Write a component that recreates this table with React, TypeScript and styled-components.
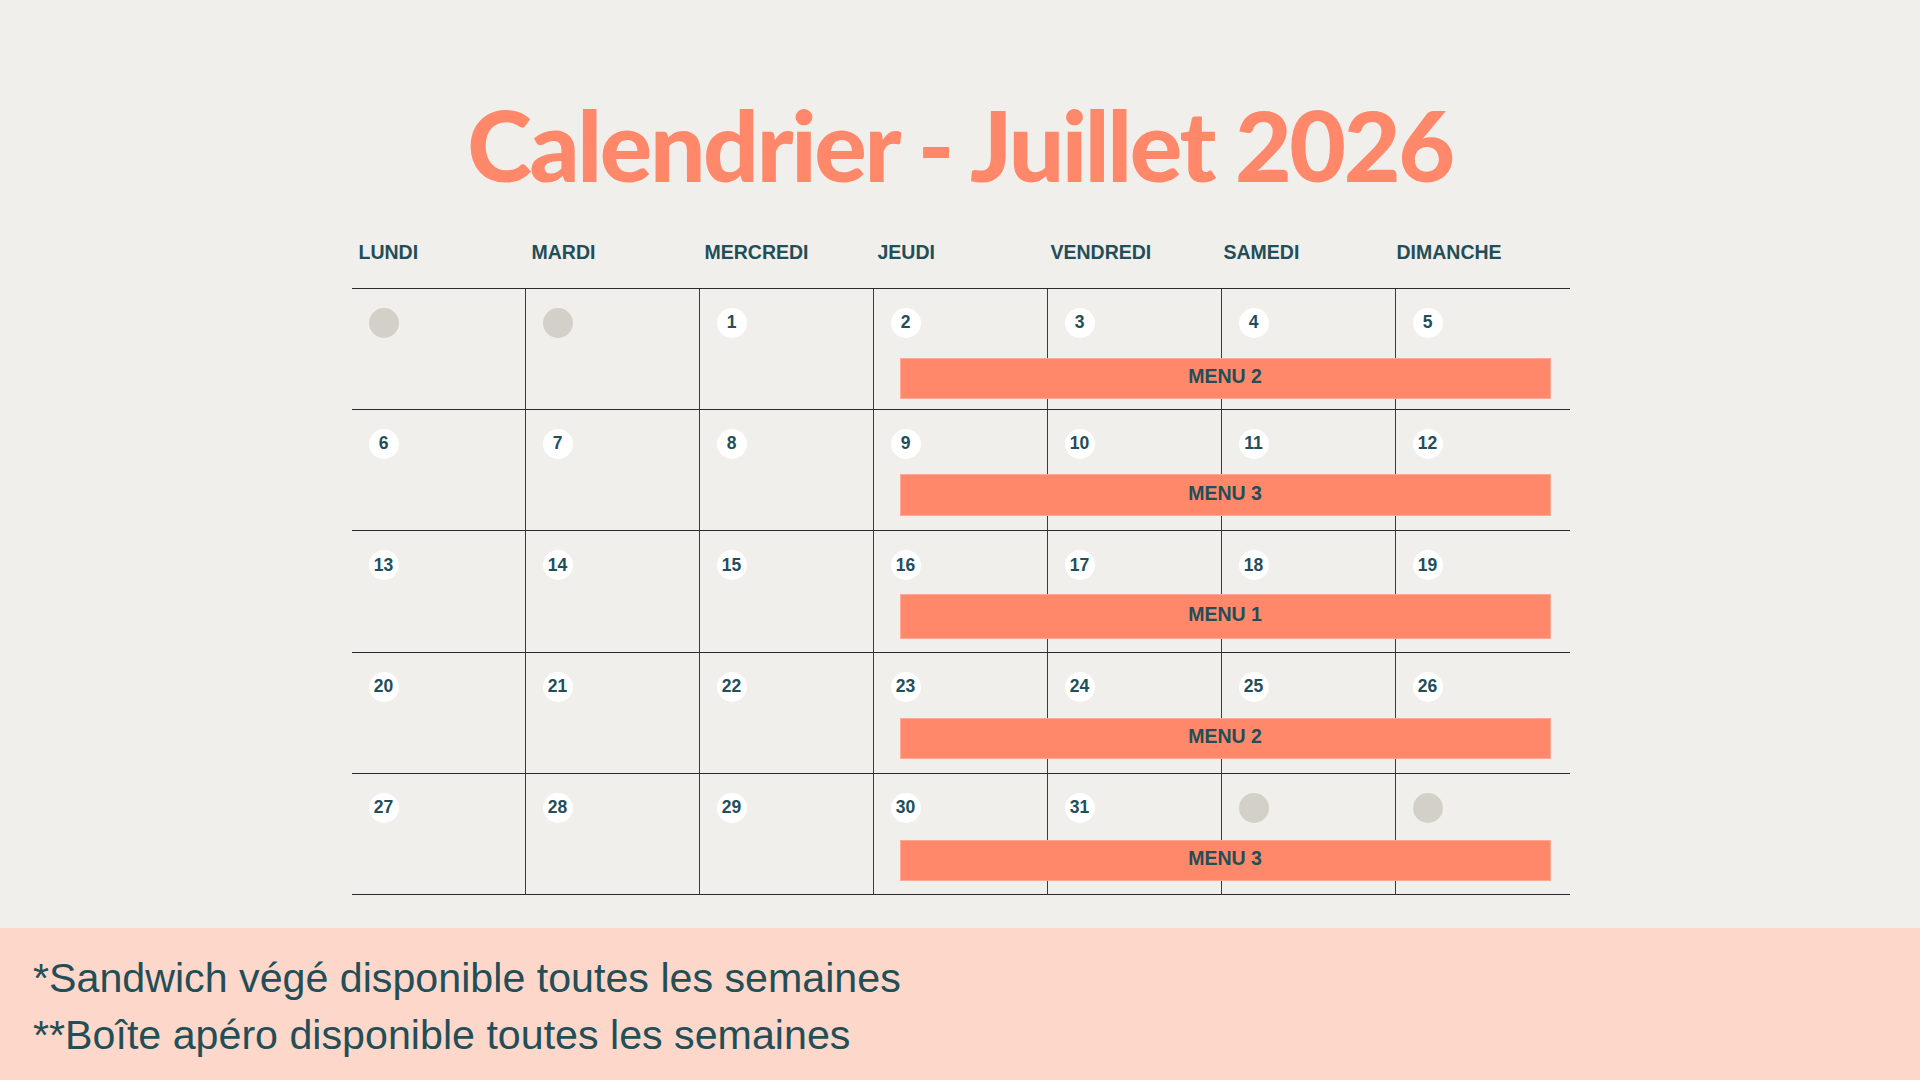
import React from "react";
import styled, { createGlobalStyle } from "styled-components";

const GlobalStyle = createGlobalStyle`
  * { box-sizing: border-box; }
  html, body { margin: 0; padding: 0; }
  body {
    background: #f1efeb;
    font-family: "Liberation Sans", Arial, sans-serif;
  }
`;

const Page = styled.div`
  width: 1920px;
  height: 1080px;
  display: flex;
  flex-direction: column;
  align-items: center;
  padding-top: 84px;
  background: #f1efeb;
  overflow: hidden;
`;

const Title = styled.h1`
  margin: 0 0 36px 0;
  font-family: "Lato", "Open Sans", sans-serif;
  font-weight: 900;
  font-size: 98px;
  line-height: 120px;
  letter-spacing: -2.4px;
  color: #ff886b;
  white-space: nowrap;
`;

const Calendar = styled.section`
  width: 1218px;
  margin-left: 1px;
  display: flex;
  flex-direction: column;
`;

const HeaderRow = styled.div`
  display: grid;
  grid-template-columns: repeat(7, 173px);
  height: 48px;
`;

const DayName = styled.div`
  padding-left: 7px;
  font-size: 19.5px;
  line-height: 24px;
  font-weight: 700;
  color: #234e58;
`;

const Grid = styled.div`
  display: grid;
  grid-template-columns: repeat(7, 1fr);
  grid-auto-rows: 121.2px;
  width: 1218px;
  border-top: 1.5px solid #2a2a2a;
`;

const Cell = styled.div<{ $last: boolean }>`
  border-bottom: 1.5px solid #2a2a2a;
  border-right: ${(p) => (p.$last ? "none" : "1px solid #3a3a3a")};
  padding: 19px 0 0 17px;
`;

const DayBadge = styled.div<{ $empty: boolean }>`
  width: 30px;
  height: 30px;
  border-radius: 50%;
  background: ${(p) => (p.$empty ? "#d3d0c9" : "#ffffff")};
  display: flex;
  align-items: center;
  justify-content: center;
  font-size: 17.5px;
  font-weight: 700;
  color: #234e58;
  line-height: 1;
`;

const MenuBar = styled.div<{ $top: number; $height: number }>`
  grid-column: 4 / 8;
  align-self: start;
  margin: ${(p) => p.$top}px 19px 0 26px;
  height: ${(p) => p.$height}px;
  background: #ff886b;
  border: 1px solid #ffa893;
  display: flex;
  align-items: center;
  justify-content: center;
  padding-bottom: 5px;
  font-size: 19.5px;
  line-height: 22px;
  font-weight: 700;
  color: #234e58;
  z-index: 1;
`;

const Footer = styled.footer`
  margin-top: auto;
  align-self: stretch;
  height: 152px;
  background: #fdd8ca;
  padding: 22px 0 0 33px;
`;

const Note = styled.p`
  margin: 0;
  font-size: 41.2px;
  line-height: 57px;
  color: #234e58;
  white-space: nowrap;
`;

const days = ["LUNDI", "MARDI", "MERCREDI", "JEUDI", "VENDREDI", "SAMEDI", "DIMANCHE"];

const weeks: { days: (number | null)[]; menu: string; top: number; height: number }[] = [
  { days: [null, null, 1, 2, 3, 4, 5], menu: "MENU 2", top: 69, height: 41 },
  { days: [6, 7, 8, 9, 10, 11, 12], menu: "MENU 3", top: 64, height: 42 },
  { days: [13, 14, 15, 16, 17, 18, 19], menu: "MENU 1", top: 63, height: 45 },
  { days: [20, 21, 22, 23, 24, 25, 26], menu: "MENU 2", top: 65, height: 41 },
  { days: [27, 28, 29, 30, 31, null, null], menu: "MENU 3", top: 66, height: 41 },
];

export default function App() {
  return (
    <>
      <GlobalStyle />
      <Page>
        <Title>Calendrier - Juillet 2026</Title>
        <Calendar>
          <HeaderRow>
            {days.map((d) => (
              <DayName key={d}>{d}</DayName>
            ))}
          </HeaderRow>
          <Grid>
            {weeks.map((w, r) => (
              <React.Fragment key={r}>
                {w.days.map((d, c) => (
                  <Cell
                    key={c}
                    $last={c === 6}
                    style={{ gridRow: r + 1, gridColumn: c + 1 }}
                  >
                    <DayBadge $empty={d === null}>{d ?? ""}</DayBadge>
                  </Cell>
                ))}
                <MenuBar $top={w.top} $height={w.height} style={{ gridRow: r + 1 }}>
                  {w.menu}
                </MenuBar>
              </React.Fragment>
            ))}
          </Grid>
        </Calendar>
        <Footer>
          <Note>*Sandwich végé disponible toutes les semaines</Note>
          <Note>**Boîte apéro disponible toutes les semaines</Note>
        </Footer>
      </Page>
    </>
  );
}
